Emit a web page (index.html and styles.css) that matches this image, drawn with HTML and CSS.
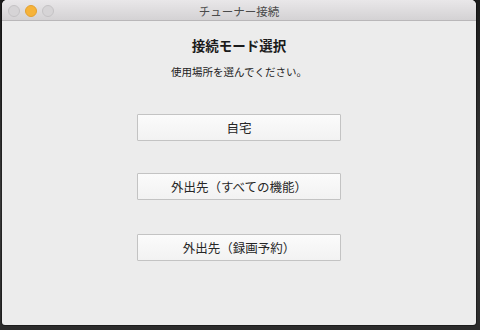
FILE: index.html
```html
<!DOCTYPE html>
<html lang="ja">
<head>
    <meta charset="UTF-8">
    <title>チューナー接続</title>
    <link rel="stylesheet" href="styles.css">
</head>
<body>
    <div class="window">
        <div class="titlebar">
            <div class="lights">
                <span class="light"></span>
                <span class="light active"></span>
                <span class="light"></span>
            </div>
            <div class="window-title">チューナー接続</div>
        </div>

        <div class="content">
            <h1>接続モード選択</h1>
            <p class="subtitle">使用場所を選んでください。</p>

            <div class="choices">
                <button class="btn btn-home">自宅</button>
                <button class="btn btn-all">外出先（すべての機能）</button>
                <button class="btn btn-rec">外出先（録画予約）</button>
            </div>
        </div>
    </div>
</body>
</html>
```

FILE: styles.css
```css
* {
    margin: 0;
    padding: 0;
    box-sizing: border-box;
}

body {
    font-family: "Noto Sans CJK JP", "Noto Sans", sans-serif;
    background: linear-gradient(180deg, #1c1c1c 0%, #3a3a3a 60%, #2b2b2b 100%);
    width: 480px;
    height: 330px;
    overflow: hidden;
    color: #222;
}

.window {
    margin-left: 2px;
    width: 474px;
    height: 325px;
    background: #ececec;
    border-radius: 5px 5px 3px 3px;
    overflow: hidden;
    display: flex;
    flex-direction: column;
    box-shadow: 0 0 0 1px rgba(0, 0, 0, 0.35);
}

.titlebar {
    height: 21px;
    background: linear-gradient(180deg, #e9e7e9 0%, #d4d2d4 100%);
    border-bottom: 1px solid #b9b7b9;
    display: flex;
    align-items: center;
    position: relative;
}

.lights {
    display: flex;
    gap: 5px;
    padding-left: 6px;
    padding-top: 2px;
}

.light {
    width: 12px;
    height: 12px;
    border-radius: 50%;
    background: #d6d4d6;
    border: 1px solid #c4c2c4;
}

.light.active {
    background: #f6b33a;
    border-color: #e3a030;
}

.window-title {
    position: absolute;
    left: 0;
    right: 0;
    top: 3px;
    text-align: center;
    font-size: 11.5px;
    color: #4a4a4a;
    line-height: 16px;
}

.content {
    display: flex;
    flex-direction: column;
    align-items: center;
    padding-top: 14px;
}

h1 {
    font-size: 13.5px;
    font-weight: 700;
    color: #1a1a1a;
    line-height: 20px;
}

.subtitle {
    margin-top: 9px;
    font-size: 10.5px;
    color: #222;
    line-height: 16px;
}

.choices {
    margin-top: 34px;
    display: flex;
    flex-direction: column;
    align-items: center;
}

.btn {
    width: 204px;
    height: 27px;
    background: linear-gradient(180deg, #fbfbfb 0%, #f2f2f2 100%);
    border: 1px solid #c3c3c3;
    border-radius: 1px;
    font-family: inherit;
    font-size: 12.5px;
    color: #262626;
    cursor: pointer;
}

.btn-all {
    margin-top: 32px;
}

.btn-rec {
    margin-top: 34px;
}
```
